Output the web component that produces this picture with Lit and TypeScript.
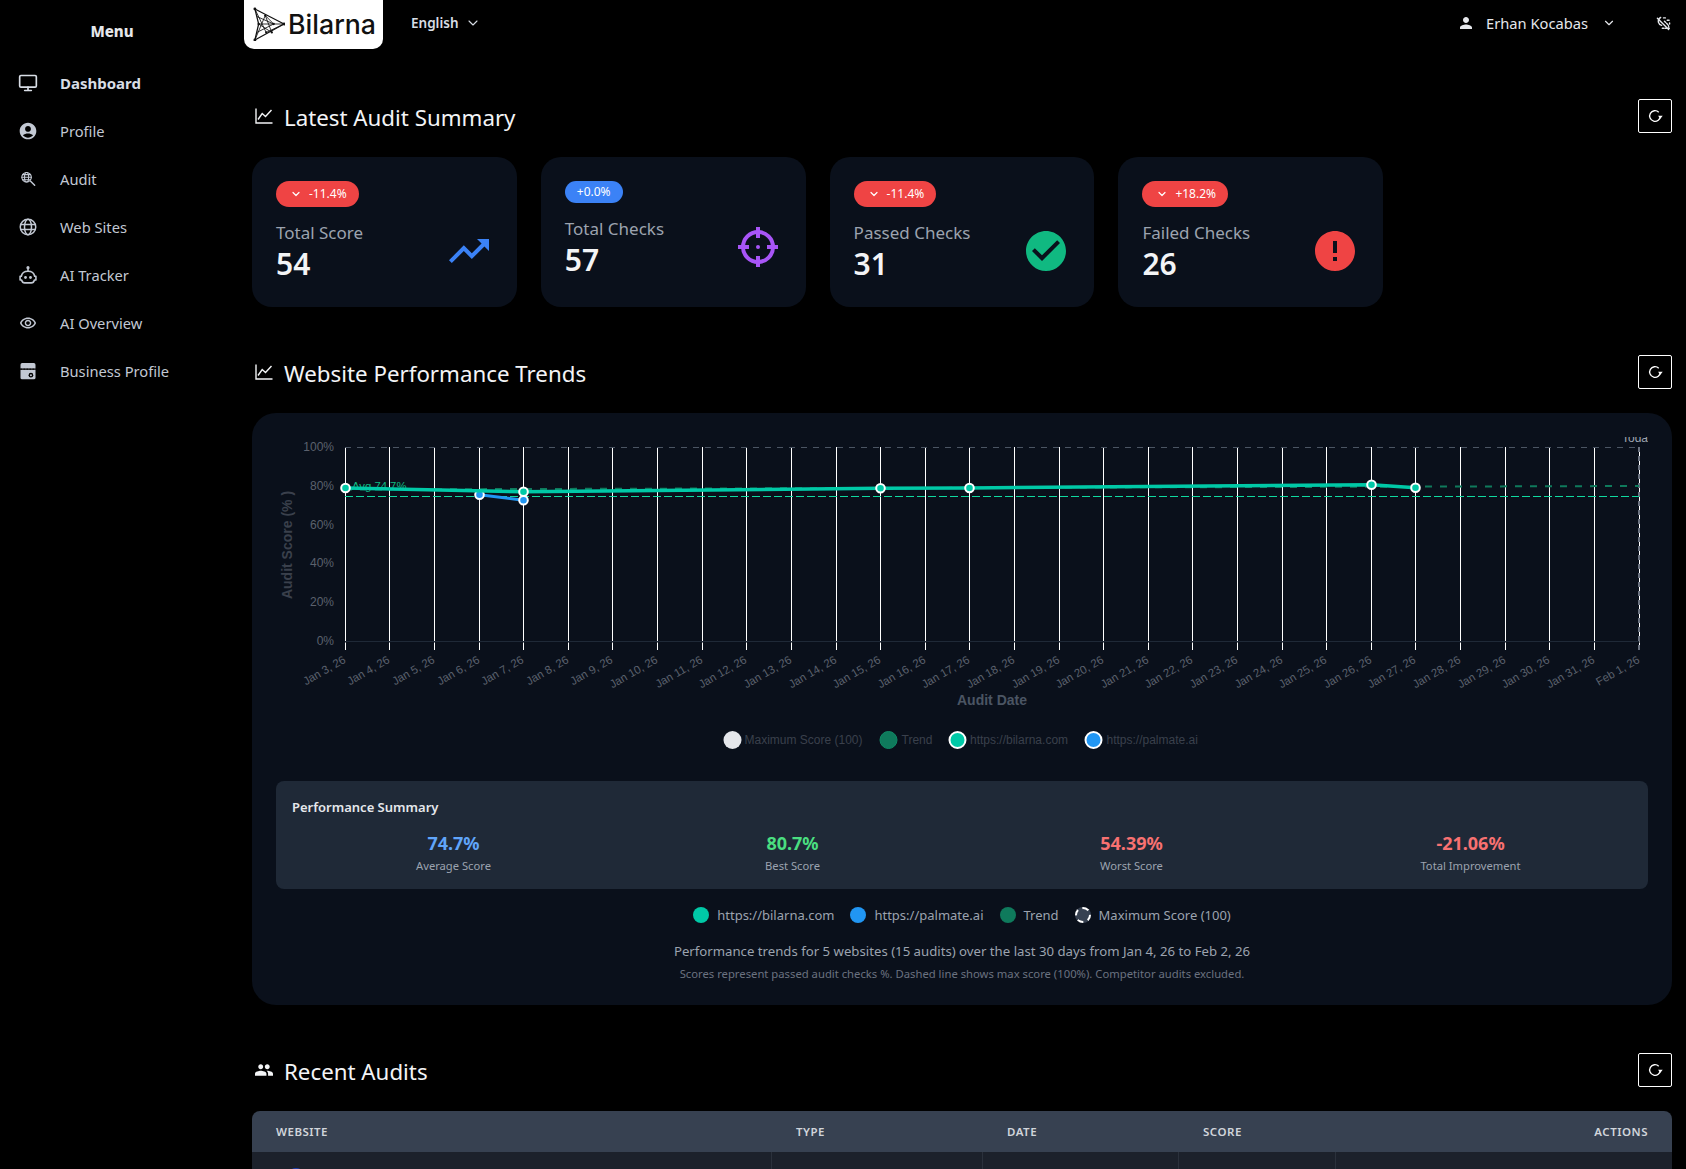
import { LitElement, html, css, svg } from "lit";
import { customElement } from "lit/decorators.js";

const chevron = html`<svg class="chev" viewBox="0 0 24 24" fill="none" stroke="currentColor" stroke-width="2" stroke-linecap="round" stroke-linejoin="round"><path d="M6 9l6 6 6-6"/></svg>`;
const chartIcon = html`<svg class="head-ico" viewBox="0 0 18 16" fill="none" stroke="currentColor" stroke-width="1.4"><path d="M1 0.5V15H17.5"/><path d="M3 11.5 L7.2 5.5 L10.5 8.5 L16.5 2"/></svg>`;
const groupIcon = html`<svg class="head-ico" viewBox="1 4 22 16" fill="currentColor"><path d="M16 11c1.66 0 2.99-1.34 2.99-3S17.66 5 16 5s-3 1.34-3 3 1.34 3 3 3zm-8 0c1.66 0 2.99-1.34 2.99-3S9.66 5 8 5 5 6.34 5 8s1.34 3 3 3zm0 2c-2.33 0-7 1.17-7 3.5V19h14v-2.5c0-2.33-4.67-3.5-7-3.5zm8 0c-.29 0-.62.02-.97.05 1.16.84 1.97 1.97 1.97 3.45V19h6v-2.5c0-2.33-4.67-3.5-7-3.5z"/></svg>`;
const refresh = html`<button class="refresh" aria-label="Refresh"><svg viewBox="0 0 24 24" fill="none" stroke="currentColor" stroke-width="2"><path d="M17.6 6.3A8 8 0 1 0 20 12"/><path d="M16.6 11.5h7L20 16z" fill="currentColor" stroke="none"/></svg></button>`;

const navItems = [
  { label: "Dashboard", active: true, icon: svg`<g fill="none" stroke="currentColor" stroke-width="2" stroke-linecap="round"><rect x="2" y="3" width="20" height="14" rx="1.5"/><path d="M12 17v4M8 21h8"/></g>` },
  { label: "Profile", icon: svg`<path fill="currentColor" d="M12 2C6.48 2 2 6.48 2 12s4.48 10 10 10 10-4.48 10-10S17.52 2 12 2zm0 4c1.93 0 3.5 1.57 3.5 3.5S13.93 13 12 13s-3.5-1.57-3.5-3.5S10.07 6 12 6zm0 14c-2.03 0-4.43-.82-6.14-2.88C7.55 15.8 9.68 15 12 15s4.45.8 6.14 2.12C16.43 19.18 14.03 20 12 20z"/>` },
  { label: "Audit", icon: svg`<g fill="none" stroke="currentColor" stroke-width="1.5" stroke-linecap="round" transform="translate(1.5 1.500) scale(.88)"><circle cx="10" cy="9.5" r="6.5"/><ellipse cx="10" cy="9.5" rx="2.8" ry="6.5"/><path d="M3.5 9.5h13M4.5 6h11M4.5 13h11"/><path stroke-width="2" d="M15.5 15l5.5 5.5"/></g>` },
  { label: "Web Sites", icon: svg`<g fill="none" stroke="currentColor" stroke-width="1.8"><circle cx="12" cy="12" r="9.3"/><ellipse cx="12" cy="12" rx="4.2" ry="9.3"/><path d="M2.8 9h18.4M2.8 15h18.4"/></g>` },
  { label: "AI Tracker", icon: svg`<g fill="none" stroke="currentColor" stroke-width="1.900" stroke-linejoin="round"><path d="M12 7.500C7 7.500 4.500 10.500 4 13.500H2.500V18H4.300C4.800 20 6.300 21.500 8 21.500H16C17.700 21.500 19.200 20 19.700 18H21.500V13.500H20C19.500 10.500 17 7.500 12 7.500Z"/><path d="M12 4.500V7.500"/></g><circle cx="12" cy="3.200" r="1.900" fill="currentColor"/><circle cx="9" cy="15" r="1.700" fill="currentColor"/><circle cx="15" cy="15" r="1.700" fill="currentColor"/>` },
  { label: "AI Overview", icon: svg`<g transform="translate(12 12) scale(.88) translate(-12 -11.5)"><path fill="currentColor" d="M12 6c3.79 0 7.17 2.13 8.82 5.5C19.17 14.87 15.79 17 12 17s-7.17-2.13-8.82-5.5C4.83 8.13 8.21 6 12 6m0-2C7 4 2.73 7.11 1 11.5 2.73 15.89 7 19 12 19s9.27-3.11 11-7.5C21.27 7.11 17 4 12 4zm0 5c1.38 0 2.5 1.12 2.5 2.5S13.38 14 12 14s-2.5-1.12-2.5-2.5S10.62 9 12 9m0-2c-2.48 0-4.5 2.02-4.5 4.5S9.52 16 12 16s4.5-2.02 4.5-4.5S14.48 7 12 7z"/></g>` },
  { label: "Business Profile", icon: svg`<path fill="currentColor" d="M5 2.5h14a2 2 0 0 1 2 2V9H3V4.500a2 2 0 0 1 2-2z"/><path fill="currentColor" d="M3 10.500h18V20a2 2 0 0 1-2 2H5a2 2 0 0 1-2-2z"/><circle cx="15.500" cy="17" r="2.800" fill="#000"/><circle cx="15.500" cy="17" r="1.200" fill="currentColor"/><path stroke="#000" stroke-width="1.200" stroke-dasharray="2 1.600" d="M3 9.800h18"/>` },
];

type Card = { badge: string; tone: string; down: boolean; label: string; value: string; icon: unknown };
const cards: Card[] = [
  { badge: "-11.4%", tone: "red", down: true, label: "Total Score", value: "54",
    icon: svg`<path fill="#3b82f6" d="M16 6l2.290 2.290-4.880 4.880-4-4L2 16.590 3.410 18l6-6 4 4 6.300-6.290L22 12V6z"/>` },
  { badge: "+0.0%", tone: "blue", down: false, label: "Total Checks", value: "57",
    icon: svg`<g fill="none" stroke="#a855f7" stroke-width="2"><circle cx="12" cy="12" r="7.500"/><path d="M12 2v5.500M12 16.500V22M2 12h5.500M16.500 12H22"/></g><circle cx="12" cy="12" r="1" fill="#a855f7"/>` },
  { badge: "-11.4%", tone: "red", down: true, label: "Passed Checks", value: "31",
    icon: svg`<path fill="#10b981" fill-rule="evenodd" d="M12 2C6.480 2 2 6.480 2 12s4.480 10 10 10 10-4.480 10-10S17.520 2 12 2zm-2 15l-5-5 1.410-1.410L10 14.170l7.590-7.590L19 8l-9 9z"/>` },
  { badge: "+18.2%", tone: "red", down: true, label: "Failed Checks", value: "26",
    icon: svg`<path fill="#ef4444" fill-rule="evenodd" d="M12 2C6.480 2 2 6.480 2 12s4.480 10 10 10 10-4.480 10-10S17.520 2 12 2zm1 15h-2v-2h2v2zm0-4h-2V7h2v6z"/>` },
];

const stats = [
  { value: "74.7%", label: "Average Score", tone: "c-blue" },
  { value: "80.7%", label: "Best Score", tone: "c-green" },
  { value: "54.39%", label: "Worst Score", tone: "c-red" },
  { value: "-21.06%", label: "Total Improvement", tone: "c-red" },
];

const dates = [
  ...Array.from({ length: 29 }, (_, i) => `Jan ${i + 3}, 26`),
  "Feb 1, 26",
];

const X0 = 345.3;
const STEP = (1639 - X0) / 29;
const xAt = (i: number) => Math.floor(X0 + STEP * i) + 0.5;
const Y_LABELS: [string, number][] = [["100%", 447], ["80%", 485.8], ["60%", 524.6], ["40%", 563.4], ["20%", 602.2], ["0%", 641]];

const teal: [number, number][] = [[0, 488], [4, 491.7], [12, 488.3], [14, 488], [23, 484.7], [24, 487.7]];
const blue: [number, number][] = [[3, 494.7], [4, 500.3]];
const pts = (a: [number, number][]) => a.map(([i, y]) => `${xAt(i)},${y}`).join(" ");

function chart() {
  return html`<svg class="chart" viewBox="276 437 1372 320" width="1372" height="320" role="img">
    ${dates.map((_, i) => svg`
      <line x1=${xAt(i)} x2=${xAt(i)} y1="447" y2="641.500" stroke="#fff" stroke-width="1"/>
      <line x1=${xAt(i)} x2=${xAt(i)} y1="642.500" y2="650" stroke="#fff" stroke-width="1"/>
    `)}
    <line x1="345" x2="1639" y1="447.500" y2="447.500" stroke="#4b5563" stroke-dasharray="6 6"/>
    <line x1="345" x2="1639" y1="641.500" y2="641.500" stroke="#1f2937"/>
    <line x1="1639" x2="1639" y1="447" y2="650" stroke="#6b7280" stroke-width="2" stroke-dasharray="5 4"/>
    <text class="today" x="1622" y="441.500">Today</text>
    <line x1="345" x2="1639" y1="496.500" y2="496.500" stroke="#10d9a0" stroke-dasharray="8 3"/>
    <text class="avg" x="352" y="490">Avg 74.7%</text>
    <line x1="345" x2="1639" y1="489.500" y2="486" stroke="#0f7a5c" stroke-width="2" stroke-dasharray="7 8"/>

    ${Y_LABELS.map(([t, y]) => svg`<text class="axis" x="334" y=${y + 4} text-anchor="end">${t}</text>`)}
    ${dates.map((d, i) => svg`<text class="axis tick" text-anchor="end" transform="translate(${xAt(i) + 1} 662) rotate(-30)">${d}</text>`)}
    <text class="title dim" text-anchor="middle" transform="translate(292 545) rotate(-90)">Audit Score (% )</text>
    <text class="title" x="992" y="705" text-anchor="middle">Audit Date</text>

    <polyline points=${pts(blue)} fill="none" stroke="#2196f3" stroke-width="3"/>
    ${blue.map(([i, y]) => svg`<circle cx=${xAt(i)} cy=${y} r="4.300" fill="#2196f3" stroke="#fff" stroke-width="2"/>`)}
    <polyline points=${pts(teal)} fill="none" stroke="#00c9a7" stroke-width="3.500"/>
    ${teal.map(([i, y]) => svg`<circle cx=${xAt(i)} cy=${y} r="4.300" fill="#00c9a7" stroke="#fff" stroke-width="2"/>`)}

    <circle cx="732.500" cy="740" r="9" fill="#e5e7eb"/>
    <text class="leg" x="744.500" y="744">Maximum Score (100)</text>
    <circle cx="888.500" cy="740" r="8.500" fill="#0f7a5c" stroke="#108a66" stroke-width="1"/>
    <text class="leg" x="901.500" y="744">Trend</text>
    <circle cx="957.500" cy="740" r="8" fill="#00c9a7" stroke="#fff" stroke-width="2"/>
    <text class="leg" x="970" y="744">https://bilarna.com</text>
    <circle cx="1093.500" cy="740" r="8" fill="#2196f3" stroke="#fff" stroke-width="2"/>
    <text class="leg" x="1106.500" y="744">https://palmate.ai</text>
  </svg>`;
}

@customElement("app-root")
export class AppRoot extends LitElement {
  static styles = css`
    :host {
      display: grid;
      grid-template-columns: 240px 1fr;
      height: 1169px;
      overflow: hidden;
      background: #000;
      color: #e5e7eb;
      font-family: "Noto Sans", sans-serif;
    }
    svg { display: block; flex: none; }
    .sidebar { padding-top: 19px; }
    .menu-title {
      height: 24px; line-height: 24px; text-align: center;
      font-size: 15px; font-weight: 800; color: #e5e7eb;
      padding-right: 16px; margin-bottom: 16px;
    }
    .nav { display: flex; flex-direction: column; }
    .nav a {
      display: flex; align-items: center; height: 48px;
      padding-left: 18px; gap: 22px;
      font-size: 14.700px; color: #c2c8d3;
    }
    .nav a.active { font-size: 15px; font-weight: 700; color: #d8dde5; }
    .nav svg { width: 20px; height: 20px; }
    .main { min-width: 0; }
    .topbar {
      display: flex; align-items: center; height: 49px;
      padding: 0 15px 0 4px; margin-bottom: 50px;
    }
    .logo {
      box-sizing: border-box;
      display: flex; align-items: center; gap: 3px;
      width: 139px; height: 49px; padding: 0 0 2px 9px;
      background: #fff; border-radius: 0 0 10px 10px; color: #111;
      font-family: Inter, sans-serif; font-size: 26.700px; font-weight: 500;
    }
    .logo svg { width: 32px; height: 34px; }
    .lang {
      display: flex; align-items: center; gap: 6px; padding-bottom: 3px;
      margin-left: 28px; font-size: 13.500px; font-weight: 600; color: #d8dde5;
    }
    .chev { width: 16px; height: 16px; stroke-width: 1.600; }
    .user {
      display: flex; align-items: center; margin-left: auto; padding-bottom: 3px;
      font-size: 14.700px; color: #e5e7eb;
    }
    .user .person { width: 18px; height: 18px; margin-right: 11px; }
    .user .chev { margin: 0 40px 0 14px; width: 14px; height: 14px; stroke-width: 2; }
    .theme { width: 15px; height: 15px; }
    .content { padding: 0 14px 0 12px; }
    .head {
      display: flex; align-items: center; height: 34px; margin-bottom: 24px;
    }
    .head-ico { width: 18px; height: 16px; margin: 0 11px 0 3px; color: #f3f4f6; }
    .head h2 { margin: 3px 0 0; font-size: 22.300px; font-weight: 400; color: #f3f4f6; line-height: 34px; }
    .refresh {
      margin-left: auto; width: 34px; height: 34px; padding: 0;
      display: flex; align-items: center; justify-content: center;
      background: #000; color: #fff; border: 1px solid #fff; border-radius: 2px;
    }
    .refresh svg { width: 16px; height: 16px; }
    .cards { display: flex; gap: 24px; margin-bottom: 48px; }
    .card {
      box-sizing: border-box; width: 264.800px; height: 150px; padding: 24px;
      background: #0a101b; border-radius: 20px;
    }
    .badge {
      display: flex; width: fit-content; align-items: center; gap: 5px;
      padding: 3px 12px; border-radius: 13px;
      font-size: 12px; line-height: 16px; color: #fff;
    }
    .badge.red { background: #ef4444; }
    .badge.blue { background: #3b82f6; }
    .badge .chev { width: 12px; height: 12px; margin: 4px 2px; stroke-width: 2.400; }
    .card-row { display: flex; align-items: center; justify-content: space-between; margin-top: 11px; }
    .card-text { padding-bottom: 3px; }
    .card-label { font-size: 17px; line-height: 29px; color: #9ca3af; }
    .card-value { font-size: 30px; line-height: 34px; font-weight: 600; color: #f3f4f6; }
    .card-row svg { width: 48px; height: 48px; }
    .panel {
      box-sizing: border-box; height: 592px; padding: 24px;
      background: #0a101b; border-radius: 24px; margin-bottom: 48px;
    }
    .chart { margin-bottom: 24px; overflow: hidden; font-family: "Liberation Sans", sans-serif; }
    .axis { font-size: 12px; fill: #5b616d; }
    .tick { font-size: 11.400px; }
    .title { font-size: 14px; font-weight: 700; fill: #4b5563; }
    .title.dim { fill: #3a404c; }
    .avg { font-size: 11.300px; fill: #10b981; }
    .today { font-size: 12px; fill: #9ca3af; }
    .leg { font-size: 12px; fill: #3a404c; }
    .summary {
      box-sizing: border-box; height: 108px; padding: 16px;
      background: #1f2937; border-radius: 8px;
    }
    .summary h3 { margin: 0 0 12px; font-size: 13px; line-height: 20px; font-weight: 600; color: #e5e7eb; }
    .stats { display: grid; grid-template-columns: repeat(4, 1fr); gap: 16px; text-align: center; }
    .stat-value { font-size: 18px; line-height: 28px; font-weight: 700; }
    .stat-label { font-size: 11.200px; line-height: 18px; color: #9ca3af; }
    .c-blue { color: #60a5fa; }
    .c-green { color: #4ade80; }
    .c-red { color: #f87171; }
    .legend {
      display: flex; justify-content: center; gap: 16px;
      margin-top: 16px; height: 20px; font-size: 13px; line-height: 20px; color: #9ca3af;
    }
    .legend span { display: flex; align-items: center; gap: 8px; }
    .dot { box-sizing: border-box; width: 16px; height: 16px; border-radius: 50%; }
    .d-teal { background: #00c9a7; }
    .d-blue { background: #2196f3; }
    .d-trend { background: #0f7a5c; }
    .d-max { background: #374151; border: 2px dashed #fff; }
    .caption { margin: 16px 0 0; text-align: center; font-size: 13.200px; line-height: 20px; color: #9ca3af; }
    .note { margin: 5px 0 0; text-align: center; font-size: 11.270px; line-height: 16px; color: #6b7280; }
    .table { border-radius: 8px 8px 0 0; overflow: hidden; }
    .thead, .tr {
      display: grid;
      grid-template-columns: 520px 211px 196px 157px 1fr;
    }
    .thead { height: 41px; align-items: center; background: #374151; }
    .th {
      padding: 0 24px; font-size: 11.500px; font-weight: 600; letter-spacing: .5px;
      color: #d1d5db; text-transform: uppercase;
    }
    .th.end { text-align: right; }
    .tr { height: 64px; background: #1c212b; }
    .td { box-sizing: border-box; padding: 16px 24px; border-right: 1px solid #2b313c; }
    .td:last-child { border-right: none; }
    .avatar { width: 18px; height: 18px; margin-left: 11px; border-radius: 50%; background: #1e40af; }
  `;

  render() {
    return html`
      <aside class="sidebar">
        <div class="menu-title">Menu</div>
        <nav class="nav">
          ${navItems.map((n) => html`<a class=${n.active ? "active" : ""}><svg viewBox="0 0 24 24">${n.icon}</svg>${n.label}</a>`)}
        </nav>
      </aside>
      <div class="main">
        <header class="topbar">
          <div class="logo">
            <svg viewBox="0 0 34 36" fill="none" stroke="#111" stroke-width=".9" stroke-linejoin="round">
              <path stroke-width="1.300" d="M2 2 L33 18 L2 35 L6 18 Z"/>
              <path d="M2 2 L14 27 M2 35 L13 9 M6 18 L33 18 M6 18 L20 27 M13 9 L20 27 M14 27 L33 18 M13 9 L22 18 M4 10 L22 18 M4 27 L22 18"/>
              <g fill="#111" stroke="none"><circle cx="2" cy="2" r="1.500"/><circle cx="33" cy="18" r="1.500"/><circle cx="2" cy="35" r="1.500"/><circle cx="6" cy="18" r="1.300"/><circle cx="13" cy="9" r="1.200"/><circle cx="14" cy="27" r="1.200"/><circle cx="20" cy="27" r="1.200"/><circle cx="22" cy="18" r="1.200"/></g>
            </svg>
            Bilarna
          </div>
          <div class="lang">English ${chevron}</div>
          <div class="user">
            <svg class="person" viewBox="0 0 24 24" fill="currentColor"><path d="M12 12c2.210 0 4-1.790 4-4s-1.790-4-4-4-4 1.790-4 4 1.790 4 4 4zm0 2c-2.670 0-8 1.340-8 4v2h16v-2c0-2.660-5.330-4-8-4z"/></svg>
            Erhan Kocabas
            ${chevron}
            <svg class="theme" viewBox="0 0 16 16" fill="none" stroke="currentColor" stroke-width="1.500" stroke-linecap="round">
              <path d="M1.500 2.500 L13.500 14.500"/>
              <path d="M5 1.500 A5 5 0 0 0 2.500 6.500 A5 5 0 0 0 6 10"/>
              <path d="M9 5.500 L13 9.500 L14 13 L5.500 13" stroke-dasharray="1.600 1.400"/>
              <path d="M8 2h2M12 4.500h2M14.500 7.500v1"/>
            </svg>
          </div>
        </header>
        <div class="content">
          <div class="head">${chartIcon}<h2>Latest Audit Summary</h2>${refresh}</div>
          <section class="cards">
            ${cards.map((c) => html`<div class="card">
              <div class="badge ${c.tone}">${c.down ? chevron : ""}${c.badge}</div>
              <div class="card-row">
                <div class="card-text"><div class="card-label">${c.label}</div><div class="card-value">${c.value}</div></div>
                <svg viewBox="0 0 24 24">${c.icon}</svg>
              </div>
            </div>`)}
          </section>

          <div class="head">${chartIcon}<h2>Website Performance Trends</h2>${refresh}</div>
          <section class="panel">
            ${chart()}
            <div class="summary">
              <h3>Performance Summary</h3>
              <div class="stats">
                ${stats.map((s) => html`<div><div class="stat-value ${s.tone}">${s.value}</div><div class="stat-label">${s.label}</div></div>`)}
              </div>
            </div>
            <div class="legend">
              <span><i class="dot d-teal"></i>https://bilarna.com</span>
              <span><i class="dot d-blue"></i>https://palmate.ai</span>
              <span><i class="dot d-trend"></i>Trend</span>
              <span><i class="dot d-max"></i>Maximum Score (100)</span>
            </div>
            <p class="caption">Performance trends for 5 websites (15 audits) over the last 30 days from Jan 4, 26 to Feb 2, 26</p>
            <p class="note">Scores represent passed audit checks %. Dashed line shows max score (100%). Competitor audits excluded.</p>
          </section>

          <div class="head">${groupIcon}<h2>Recent Audits</h2>${refresh}</div>
          <section class="table">
            <div class="thead">
              <div class="th">Website</div><div class="th">Type</div><div class="th">Date</div><div class="th">Score</div><div class="th end">Actions</div>
            </div>
            <div class="tr">
              <div class="td"><div class="avatar"></div></div><div class="td"></div><div class="td"></div><div class="td"></div><div class="td"></div>
            </div>
          </section>
        </div>
      </div>
    `;
  }
}
